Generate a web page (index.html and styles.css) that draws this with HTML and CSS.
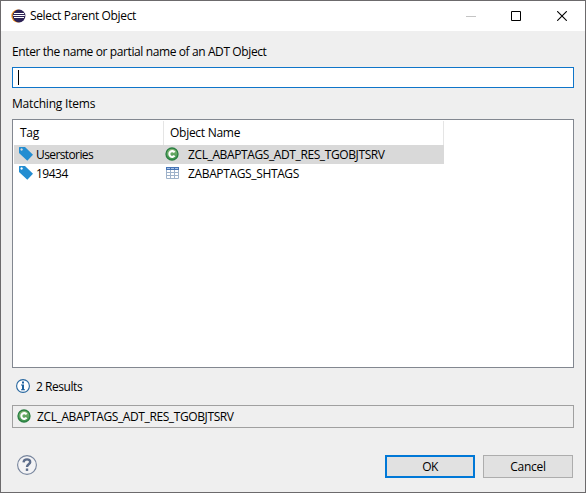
FILE: index.html
```html
<!DOCTYPE html>
<html lang="en">
<head>
<meta charset="utf-8">
<title>Select Parent Object</title>
<link rel="stylesheet" href="styles.css">
</head>
<body>
<svg class="defs" width="0" height="0">
  <defs>
    <linearGradient id="green" x1="0" y1="0" x2="0" y2="1"><stop offset="0" stop-color="#8cba78"/><stop offset="1" stop-color="#38924b"/></linearGradient>
    <symbol id="class-icon" viewBox="0 0 14 14">
      <circle cx="7" cy="7" r="6" fill="url(#green)" stroke="#297f42" stroke-width="1.3"/>
      <path d="M9.6 5.3A2.9 2.9 0 1 0 9.6 8.7" fill="none" stroke="#fff" stroke-width="2.1"/>
    </symbol>
    <symbol id="tag-icon" viewBox="0 0 14 14">
      <path fill="#238dd1" fill-rule="evenodd" d="M.5 0H6L14 7.7 8.3 13.7 0 6V.5ZM2.6 1.3a1.2 1.2 0 1 0 .01 0Z"/>
    </symbol>
  </defs>
</svg>
<div class="dialog">
  <header class="titlebar">
    <svg class="app-icon" width="15" height="14" viewBox="0 0 15 14">
      <circle cx="6.7" cy="7" r="6.4" fill="#f6941e"/>
      <circle cx="8" cy="7" r="6.4" fill="#2c2255"/>
      <path d="M3 4.5h10M2.2 6.5h11.6M3 8.5h10" stroke="#fff" stroke-width="1"/>
    </svg>
    <span class="title">Select Parent Object</span>
    <div class="controls">
      <svg width="10" height="10"><path d="M0 5.5h10" stroke="#c4c4c4"/></svg>
      <svg width="10" height="10"><path d="M.5.5h9v9h-9z" fill="none" stroke="#000"/></svg>
      <svg class="close" width="10" height="10"><path d="M.2.2l9.6 9.6M9.8.2L.2 9.8" stroke="#000" stroke-width="1.1"/></svg>
    </div>
  </header>
  <main class="content">
    <div class="label prompt"><span class="t-prompt">Enter the name or partial name of an ADT Object</span></div>
    <div class="input"><span class="caret"></span></div>
    <div class="label matching"><span class="t-match">Matching Items</span></div>
    <div class="list">
      <div class="row head"><div class="cell tag"><span class="t-tag">Tag</span></div><div class="cell object"><span class="t-object">Object Name</span></div></div>
      <div class="row selected">
        <div class="cell tag"><svg class="icon" width="14" height="14"><use href="#tag-icon"/></svg><span class="t-user">Userstories</span></div>
        <div class="cell object"><svg class="icon" width="14" height="14"><use href="#class-icon"/></svg><span class="t-zcl">ZCL_ABAPTAGS_ADT_RES_TGOBJTSRV</span></div>
      </div>
      <div class="row">
        <div class="cell tag"><svg class="icon" width="14" height="14"><use href="#tag-icon"/></svg><span class="t-num">19434</span></div>
        <div class="cell object"><svg class="icon table" width="13" height="12" viewBox="0 0 13 12">
          <path fill="#fff" d="M0 0h13v12H0z"/><path d="M.5 3v8.5h12V3M4.5 3v9M8.5 3v9M1 5.5h11M1 8.5h11" fill="none" stroke="#9eb2ca"/><path fill="#4674b5" d="M0 0h13v3H0z"/><path d="M1 1.5h3M5 1.5h3M9 1.5h3" stroke="#a9c3e8"/>
        </svg><span class="t-zab">ZABAPTAGS_SHTAGS</span></div>
      </div>
    </div>
    <div class="results">
      <svg width="14" height="14" viewBox="0 0 14 14"><circle cx="7" cy="7" r="6.4" fill="#fff" stroke="#28679f" stroke-width="1.1"/><path fill="#1c619f" d="M6 2.5h2v2H6zM5 5.5h3v4.7h1v1H5v-1h1V6.5H5z"/></svg>
      <span class="t-results">2 Results</span>
    </div>
    <div class="status"><svg width="14" height="14"><use href="#class-icon"/></svg><span class="t-zcl">ZCL_ABAPTAGS_ADT_RES_TGOBJTSRV</span></div>
    <footer class="footer">
      <svg class="help" width="20" height="20" viewBox="0 0 20 20"><circle cx="10" cy="10" r="9.4" fill="#f3f3f5" stroke="#76849c" stroke-width="1.1"/><path d="M6.6 7.4C6.7 3.4 13.4 3.4 13.2 7.1 13.1 9.3 10 9.3 10 12" fill="none" stroke="#5d6d8b" stroke-width="2.4"/><path fill="#5d6d8b" d="M8.8 13.5h2.4v2.4H8.8z"/></svg>
      <button class="btn primary"><span class="t-ok">OK</span></button>
      <button class="btn"><span class="t-cancel">Cancel</span></button>
    </footer>
  </main>
</div>
</body>
</html>
```
FILE: styles.css
```css
* { box-sizing: border-box; }
body { margin: 0; font: 12px/16px "Open Sans", "Noto Sans", sans-serif; color: #000; }
.defs { position: absolute; }
svg { display: block; flex: none; }
span { white-space: nowrap; }
.dialog { width: 586px; height: 493px; border: 1px solid #6c6a6c; background: #efefef; display: flex; flex-direction: column; }
.titlebar { height: 30px; flex: none; background: #fff; display: flex; align-items: center; padding: 0 18px 0 10px; }
.title { margin-left: 4px; letter-spacing: -.35px; }
.controls { margin-left: auto; display: flex; gap: 35px; }
.close { margin-left: 1px; }
.content { padding: 13px 11px 0; display: flex; flex-direction: column; }
.label { height: 16px; }
.input { margin-top: 7px; height: 21px; border: 1px solid #0f75c9; background: #fff; padding: 2px 5px; }
.caret { display: block; width: 1px; height: 15px; background: #000; }
.matching { margin-top: 8px; }
.list { margin-top: 7px; height: 249px; border: 1px solid #828790; background: #fff; padding: 1px; }
.row { display: flex; width: 430px; height: 19px; }
.row.head { height: 24px; }
.row.selected { background: #d9d9d9; }
.cell { display: flex; align-items: center; }
.cell.tag { width: 150px; padding-left: 5px; }
.cell.object { flex: 1; padding-left: 1px; }
.head .cell { border-right: 1px solid #e5e5e5; padding-left: 6px; }
.icon { margin-bottom: 2px; }
.icon + span { margin-left: 3px; }
.object .icon + span { margin-left: 9px; }
.object .icon.table { margin-left: 1px; }
.results { margin: 11px 0 0 4px; height: 16px; display: flex; align-items: center; gap: 6px; }
.results svg { margin-bottom: 2px; }
.status { margin-top: 10px; height: 23px; border: 1px solid #a0a0a0; display: flex; align-items: center; gap: 6px; padding-left: 4px; }
.status svg { margin-bottom: 2px; }
.footer { display: flex; align-items: center; margin-top: 27px; height: 23px; padding-right: 1px; gap: 8px; }
.help { margin: 0 auto 3px 5px; }
.btn { width: 90px; height: 23px; padding: 0; border: 1px solid #adadad; background: #e1e1e1; font: inherit; color: #000; }
.btn.primary { border: 2px solid #0078d7; }
.t-prompt, .t-zcl { letter-spacing: -.39px; }
.t-zab { letter-spacing: -.36px; }
.t-match { letter-spacing: -.2px; }
.t-tag, .t-cancel { letter-spacing: -.3px; }
.t-object { letter-spacing: -.27px; }
.t-user { letter-spacing: -.6px; }
.t-num, .t-ok { letter-spacing: -.5px; }
.t-results { letter-spacing: -.45px; }
```
